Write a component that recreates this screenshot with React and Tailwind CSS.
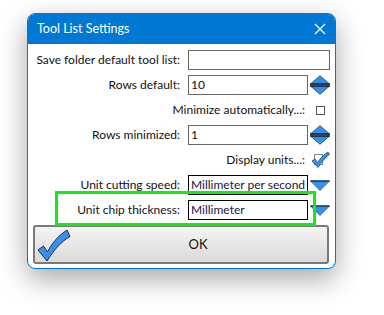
import React from "react";

const FONT = { fontFamily: 'Lato, "Noto Sans", sans-serif' };

function Spinner() {
  return (
    <svg width="20" height="20" viewBox="0 0 20 20">
      <path d="M0.5 9 L10 0.7 L19.5 9 Z" fill="#3391f0" stroke="#1d3f66" strokeWidth="0.8" strokeLinejoin="round" />
      <path d="M0.5 11 L10 19.3 L19.5 11 Z" fill="#3391f0" stroke="#1d3f66" strokeWidth="0.8" strokeLinejoin="round" />
      <rect x="0" y="8.4" width="20" height="1.3" fill="#111" />
      <rect x="0" y="10.3" width="20" height="1.3" fill="#111" />
    </svg>
  );
}

function DropArrow() {
  return (
    <svg width="20" height="11" viewBox="0 0 20 11">
      <path d="M0.5 1 L19.5 1 L10 10.5 Z" fill="#3391f0" stroke="#2a4c74" strokeWidth="0.7" strokeLinejoin="round" />
      <rect x="0.5" y="0.3" width="19" height="1.4" fill="#22364e" />
    </svg>
  );
}

function CheckedBox() {
  return (
    <svg width="20" height="18" viewBox="0 0 20 18">
      <rect x="4.5" y="3.5" width="8" height="10" fill="#fff" stroke="#888" />
      <path d="M2 10 L5 8 L7.5 11.5 C10.5 7 14 3.5 18 1 L19.5 3.5 C15.5 6.5 11.5 11 8 16.5 Z" fill="#3391f0" stroke="#234a78" strokeWidth="0.8" strokeLinejoin="round" />
    </svg>
  );
}

function BigCheck() {
  return (
    <svg width="34" height="34" viewBox="0 0 34 34">
      <path d="M1 21 L6.5 17 L10.5 23 C15 14 21 7 30 1 L33 7.5 C24.5 12.5 17.5 20 10 32 Z" fill="#3391f0" stroke="#2b2b2b" strokeWidth="1" strokeLinejoin="round" />
    </svg>
  );
}

function Label({ children, className = "" }) {
  return (
    <div className={`text-right text-[12px] text-[#111] whitespace-nowrap ${className}`}>{children}</div>
  );
}

export default function App() {
  return (
    <div className="w-[384px] h-[315px] bg-white relative" style={FONT}>
      <div className="absolute left-[27px] top-[13px] w-[309px] h-[256px] rounded-[8px] border border-[#0078d4] bg-white overflow-hidden shadow-[0_10px_28px_rgba(0,0,0,0.35)] flex flex-col">
        {/* title bar */}
        <div className="h-[30px] bg-[#0078d4] flex items-center justify-between pl-[9px] pr-[9px] shrink-0">
          <span className="text-white text-[12.5px]">Tool List Settings</span>
          <svg width="12" height="12" viewBox="0 0 12 12">
            <path d="M1 1 L11 11 M11 1 L1 11" stroke="#fff" strokeWidth="1.2" />
          </svg>
        </div>

        <div className="relative flex-1 pt-[6px] px-[5px] flex flex-col gap-[5px]">
          <div className="grid grid-cols-[147px_8px_120px_2px_20px] h-[20px] items-center">
            <Label>Save folder default tool list:</Label>
            <div />
            <div className="col-span-3 h-[20px] border border-[#666]" />
          </div>

          <div className="grid grid-cols-[147px_8px_120px_2px_20px] h-[20px] items-center">
            <Label>Rows default:</Label>
            <div />
            <div className="h-[20px] border border-[#666] px-[2px] text-[12px] leading-[18px] text-[#111]">10</div>
            <div />
            <Spinner />
          </div>

          <div className="grid grid-cols-[147px_8px_120px_2px_20px] h-[20px] items-center">
            <Label className="col-span-3 pr-[3px]">Minimize automatically...:</Label>
            <div />
            <div className="flex justify-center">
              <div className="w-[9px] h-[9px] border border-[#555] bg-white" />
            </div>
          </div>

          <div className="grid grid-cols-[147px_8px_120px_2px_20px] h-[20px] items-center">
            <Label>Rows minimized:</Label>
            <div />
            <div className="h-[20px] border border-[#666] px-[2px] text-[12px] leading-[18px] text-[#111]">1</div>
            <div />
            <Spinner />
          </div>

          <div className="grid grid-cols-[147px_8px_120px_2px_20px] h-[20px] items-center">
            <Label className="col-span-3 pr-[3px]">Display units...:</Label>
            <div />
            <div className="flex justify-center">
              <CheckedBox />
            </div>
          </div>

          <div className="grid grid-cols-[147px_8px_120px_2px_20px] h-[20px] items-center">
            <Label>Unit cutting speed:</Label>
            <div />
            <div className="h-[20px] border-[1.5px] border-black px-[2px] text-[12px] leading-[17px] text-[#1a1440] whitespace-nowrap overflow-hidden">Millimeter per second</div>
            <div />
            <DropArrow />
          </div>

          <div className="grid grid-cols-[147px_8px_120px_2px_20px] h-[20px] items-center">
            <Label>Unit chip thickness:</Label>
            <div />
            <div className="h-[20px] border-[1.5px] border-black px-[2px] text-[12px] leading-[17px] text-[#1a1440] whitespace-nowrap overflow-hidden">Millimeter</div>
            <div />
            <DropArrow />
          </div>

          {/* OK button */}
          <div className="h-[39px] w-[296px] rounded-[3px] border-2 border-[#7a7a7a] bg-gradient-to-b from-[#f4f4f4] to-[#dadada] flex items-center">
            <div className="pl-[2px] pt-[2px]">
              <BigCheck />
            </div>
            <div className="flex-1 text-center text-[13px] text-[#111] pr-[2px]">OK</div>
          </div>

          {/* highlight box */}
          <div className="absolute left-[27px] top-[147px] w-[261px] h-[35px] border-[3px] border-[#12ec12] pointer-events-none" />
        </div>
      </div>
    </div>
  );
}
